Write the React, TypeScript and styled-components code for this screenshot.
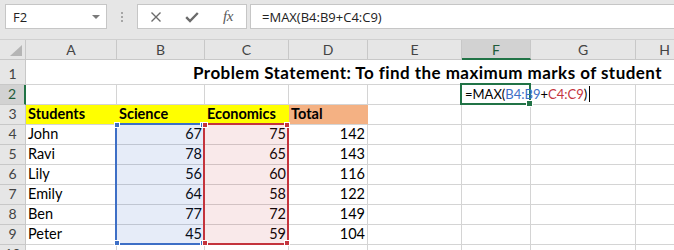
import React from "react";
import styled, { createGlobalStyle } from "styled-components";

const GlobalStyle = createGlobalStyle`
  html, body { margin: 0; padding: 0; background: #ffffff; overflow: hidden; }
  *, *::before, *::after { box-sizing: border-box; }
`;

const COLS = [26, 91, 88, 84, 79, 94, 69, 105, 58];
const COL_NAMES = ["A", "B", "C", "D", "E", "F", "G", "H"];
const GRID = "#d4d4d4";
const BLUE = "#3d6fc6";
const RED = "#c4343d";
const GREEN = "#217346";

const colLine = (i: number) => COLS.slice(0, i + 1).reduce((a, b) => a + b, 0) - 1;
// row gridlines relative to sheet top: header bottom = 19, row1 = 44, row n (n>=2) = 44 + 20*(n-1)
const rowLine = (r: number) => (r === 0 ? 19 : 44 + 20 * (r - 1));

const Window = styled.div`
  width: 674px;
  height: 250px;
  overflow: hidden;
  background: #ffffff;
  font-family: Lato, "Liberation Sans", sans-serif;
`;

/* ---------- formula bar ---------- */
const FormulaBar = styled.div`
  height: 40px;
  background: #e6e6e6;
  border-bottom: 1px solid #d0d0d0;
  display: flex;
  align-items: flex-start;
  padding: 4px 0 0 5px;
`;

const NameBox = styled.div`
  width: 102px;
  height: 25px;
  background: #ffffff;
  border: 1px solid #c6c6c6;
  display: flex;
  align-items: center;
  justify-content: space-between;
  padding: 0 6px 0 7px;
  font-family: "Open Sans", "Noto Sans", sans-serif;
  font-size: 13px;
  color: #222;
`;

const DropArrow = styled.span`
  width: 0;
  height: 0;
  border-left: 4px solid transparent;
  border-right: 4px solid transparent;
  border-top: 4px solid #7a7a7a;
`;

const Grip = styled.div`
  width: 30px;
  height: 25px;
  display: flex;
  flex-direction: column;
  align-items: center;
  justify-content: center;
  gap: 2px;
`;

const GripDot = styled.span`
  width: 2px;
  height: 2px;
  background: #a6a6a6;
`;

const ButtonBox = styled.div`
  width: 110px;
  height: 25px;
  background: #ffffff;
  border: 1px solid #c6c6c6;
  display: flex;
  align-items: center;
  justify-content: space-around;
  margin-right: 3px;
`;

const BarButton = styled.span`
  width: 20px;
  height: 20px;
  display: flex;
  align-items: center;
  justify-content: center;
  color: #6b6b6b;
`;

const FxLabel = styled.span`
  font-family: "Liberation Serif", "DejaVu Serif", serif;
  font-style: italic;
  font-size: 15px;
  color: #5a5a5a;
  letter-spacing: -0.5px;
`;

const FormulaInput = styled.div`
  flex: 1;
  height: 25px;
  margin-right: -4px;
  background: #ffffff;
  border: 1px solid #c6c6c6;
  display: flex;
  align-items: center;
  padding-left: 11px;
  font-family: "Open Sans", "Noto Sans", sans-serif;
  font-size: 13px;
  color: #222;
  white-space: nowrap;
`;

/* ---------- sheet ---------- */
const SheetArea = styled.div`
  position: relative;
`;

const Grid = styled.div`
  display: grid;
  grid-template-columns: ${COLS.map((c) => `${c}px`).join(" ")};
  grid-template-rows: 20px 25px repeat(9, 20px);
`;

const Corner = styled.div`
  background: #e6e6e6;
  border-right: 1px solid #c8c8c8;
  border-bottom: 1px solid #c8c8c8;
  display: flex;
  align-items: flex-end;
  justify-content: flex-end;
  padding: 0 3px 3px 0;
`;

const CornerTriangle = styled.span`
  width: 0;
  height: 0;
  border-left: 12px solid transparent;
  border-bottom: 11px solid #b5b5b5;
`;

const ColHeader = styled.div<{ $selected?: boolean }>`
  background: ${(p) => (p.$selected ? "#d2d2d2" : "#e6e6e6")};
  border-right: 1px solid #c8c8c8;
  border-bottom: ${(p) => (p.$selected ? `2px solid ${GREEN}` : "1px solid #c8c8c8")};
  display: flex;
  align-items: center;
  justify-content: center;
  font-size: 14px;
  color: ${(p) => (p.$selected ? "#1e5c3a" : "#444444")};
  padding-top: ${(p) => (p.$selected ? "1px" : "0")};
`;

const RowHeader = styled.div<{ $selected?: boolean }>`
  background: ${(p) => (p.$selected ? "#d2d2d2" : "#e6e6e6")};
  border-right: ${(p) => (p.$selected ? `2px solid ${GREEN}` : "1px solid #c8c8c8")};
  border-bottom: 1px solid #c8c8c8;
  display: flex;
  align-items: flex-end;
  justify-content: center;
  line-height: 18px;
  padding-bottom: 1px;
  font-size: 14px;
  color: ${(p) => (p.$selected ? "#1e5c3a" : "#444444")};
`;

const Cell = styled.div<{ $fill?: string; $right?: boolean; $bold?: boolean }>`
  background: ${(p) => p.$fill ?? "transparent"};
  border-right: 1px solid ${(p) => p.$fill ?? GRID};
  border-bottom: 1px solid ${GRID};
  display: flex;
  align-items: flex-end;
  justify-content: ${(p) => (p.$right ? "flex-end" : "flex-start")};
  padding: 0 2px 1px 2px;
  line-height: 18px;
  font-size: 14.5px;
  font-weight: ${(p) => (p.$bold ? 700 : 400)};
  color: #000;
  white-space: nowrap;
  overflow: visible;
`;

const TitleCell = styled.div`
  grid-column: 2 / span 8;
  border-bottom: 1px solid ${GRID};
  display: flex;
  align-items: flex-end;
  padding: 0 0 1px 167px;
  line-height: 20px;
  font-size: 17px;
  letter-spacing: 0.45px;
  font-weight: 700;
  color: #000;
  white-space: nowrap;
`;

const EditText = styled.span`
  position: relative;
  z-index: 3;
  display: inline-flex;
  align-items: center;
  padding-left: 1px;
  font-size: 13px;
`;

const Ref = styled.span<{ $color: string }>`
  color: ${(p) => p.$color};
`;

const Caret = styled.span`
  width: 1px;
  height: 16px;
  background: #000;
  margin-left: 2px;
`;

/* ---------- overlays ---------- */
const RangeFrame = styled.div<{ $color: string; $tint: string }>`
  position: absolute;
  border: 2px solid ${(p) => p.$color};
  background: ${(p) => p.$tint};
  pointer-events: none;
  z-index: 2;
`;

const Handle = styled.span<{ $color: string; $v: "top" | "bottom"; $h: "left" | "right" }>`
  position: absolute;
  width: 6px;
  height: 6px;
  background: ${(p) => p.$color};
  border: 1px solid #fff;
  ${(p) => (p.$v === "top" ? "top: -3px;" : "bottom: -3px;")}
  ${(p) => (p.$h === "left" ? "left: -3px;" : "right: -3px;")}
`;

const ActiveFrame = styled.div`
  position: absolute;
  border: 2px solid ${GREEN};
  pointer-events: none;
  z-index: 2;
`;

const FillHandle = styled.span`
  position: absolute;
  right: -4px;
  bottom: -4px;
  width: 7px;
  height: 7px;
  background: ${GREEN};
  border: 1px solid #fff;
`;

const YELLOW = "#ffff00";
const SALMON = "#f4b183";

type Row = { name: string; sci: number; eco: number; total: number };
const DATA: Row[] = [
  { name: "John", sci: 67, eco: 75, total: 142 },
  { name: "Ravi", sci: 78, eco: 65, total: 143 },
  { name: "Lily", sci: 56, eco: 60, total: 116 },
  { name: "Emily", sci: 64, eco: 58, total: 122 },
  { name: "Ben", sci: 77, eco: 72, total: 149 },
  { name: "Peter", sci: 45, eco: 59, total: 104 },
];

const frameBox = (c0: number, c1: number, r0: number, r1: number) => {
  const left = colLine(c0 - 1) - 1;
  const right = colLine(c1) + 1;
  const top = rowLine(r0 - 1) - 1;
  const bottom = rowLine(r1) + 1;
  return { left, top, width: right - left, height: bottom - top };
};

const Range: React.FC<{ color: string; tint: string; box: React.CSSProperties }> = ({ color, tint, box }) => (
  <RangeFrame $color={color} $tint={tint} style={box}>
    <Handle $color={color} $v="top" $h="left" />
    <Handle $color={color} $v="top" $h="right" />
    <Handle $color={color} $v="bottom" $h="left" />
    <Handle $color={color} $v="bottom" $h="right" />
  </RangeFrame>
);

const CrossIcon = () => (
  <svg width="12" height="12" viewBox="0 0 12 12">
    <path d="M1.5 1.5 L10.5 10.5 M10.5 1.5 L1.5 10.5" stroke="#6b6b6b" strokeWidth="1.4" fill="none" />
  </svg>
);

const CheckIcon = () => (
  <svg width="14" height="12" viewBox="0 0 14 12">
    <path d="M1.2 6.2 L5 10 L12.8 2" stroke="#6b6b6b" strokeWidth="2.4" fill="none" />
  </svg>
);

export default function App() {
  const blueBox = frameBox(2, 2, 4, 9);
  const redBox = frameBox(3, 3, 4, 9);
  const active = frameBox(6, 6, 2, 2);

  const emptyCells = (from: number, row: number) =>
    COL_NAMES.slice(from).map((c) => <Cell key={`${c}${row}`} />);

  return (
    <Window>
      <GlobalStyle />
      <FormulaBar>
        <NameBox>
          F2
          <DropArrow />
        </NameBox>
        <Grip>
          <GripDot />
          <GripDot />
          <GripDot />
        </Grip>
        <ButtonBox>
          <BarButton>
            <CrossIcon />
          </BarButton>
          <BarButton>
            <CheckIcon />
          </BarButton>
          <BarButton>
            <FxLabel>fx</FxLabel>
          </BarButton>
        </ButtonBox>
        <FormulaInput>=MAX(B4:B9+C4:C9)</FormulaInput>
      </FormulaBar>

      <SheetArea>
        <Grid>
          <Corner>
            <CornerTriangle />
          </Corner>
          {COL_NAMES.map((c) => (
            <ColHeader key={c} $selected={c === "F"}>
              {c}
            </ColHeader>
          ))}

          <RowHeader>1</RowHeader>
          <TitleCell>Problem Statement: To find the maximum marks of student</TitleCell>

          <RowHeader $selected>2</RowHeader>
          <Cell />
          <Cell />
          <Cell />
          <Cell />
          <Cell />
          <Cell>
            <EditText>
              =MAX(<Ref $color={BLUE}>B4:B9</Ref>+<Ref $color={RED}>C4:C9</Ref>)
              <Caret />
            </EditText>
          </Cell>
          <Cell />
          <Cell />

          <RowHeader>3</RowHeader>
          <Cell $fill={YELLOW} $bold>Students</Cell>
          <Cell $fill={YELLOW} $bold>Science</Cell>
          <Cell $fill={YELLOW} $bold>Economics</Cell>
          <Cell $fill={SALMON} $bold>Total</Cell>
          {emptyCells(4, 3)}

          {DATA.map((d, i) => (
            <React.Fragment key={d.name}>
              <RowHeader>{i + 4}</RowHeader>
              <Cell>{d.name}</Cell>
              <Cell $right>{d.sci}</Cell>
              <Cell $right>{d.eco}</Cell>
              <Cell $right>{d.total}</Cell>
              {emptyCells(4, i + 4)}
            </React.Fragment>
          ))}

          <RowHeader>10</RowHeader>
          {emptyCells(0, 10)}
        </Grid>

        <Range color={BLUE} tint="rgba(61, 111, 198, 0.13)" box={blueBox} />
        <Range color={RED} tint="rgba(196, 52, 61, 0.11)" box={redBox} />
        <ActiveFrame style={active}>
          <FillHandle />
        </ActiveFrame>
      </SheetArea>
    </Window>
  );
}
